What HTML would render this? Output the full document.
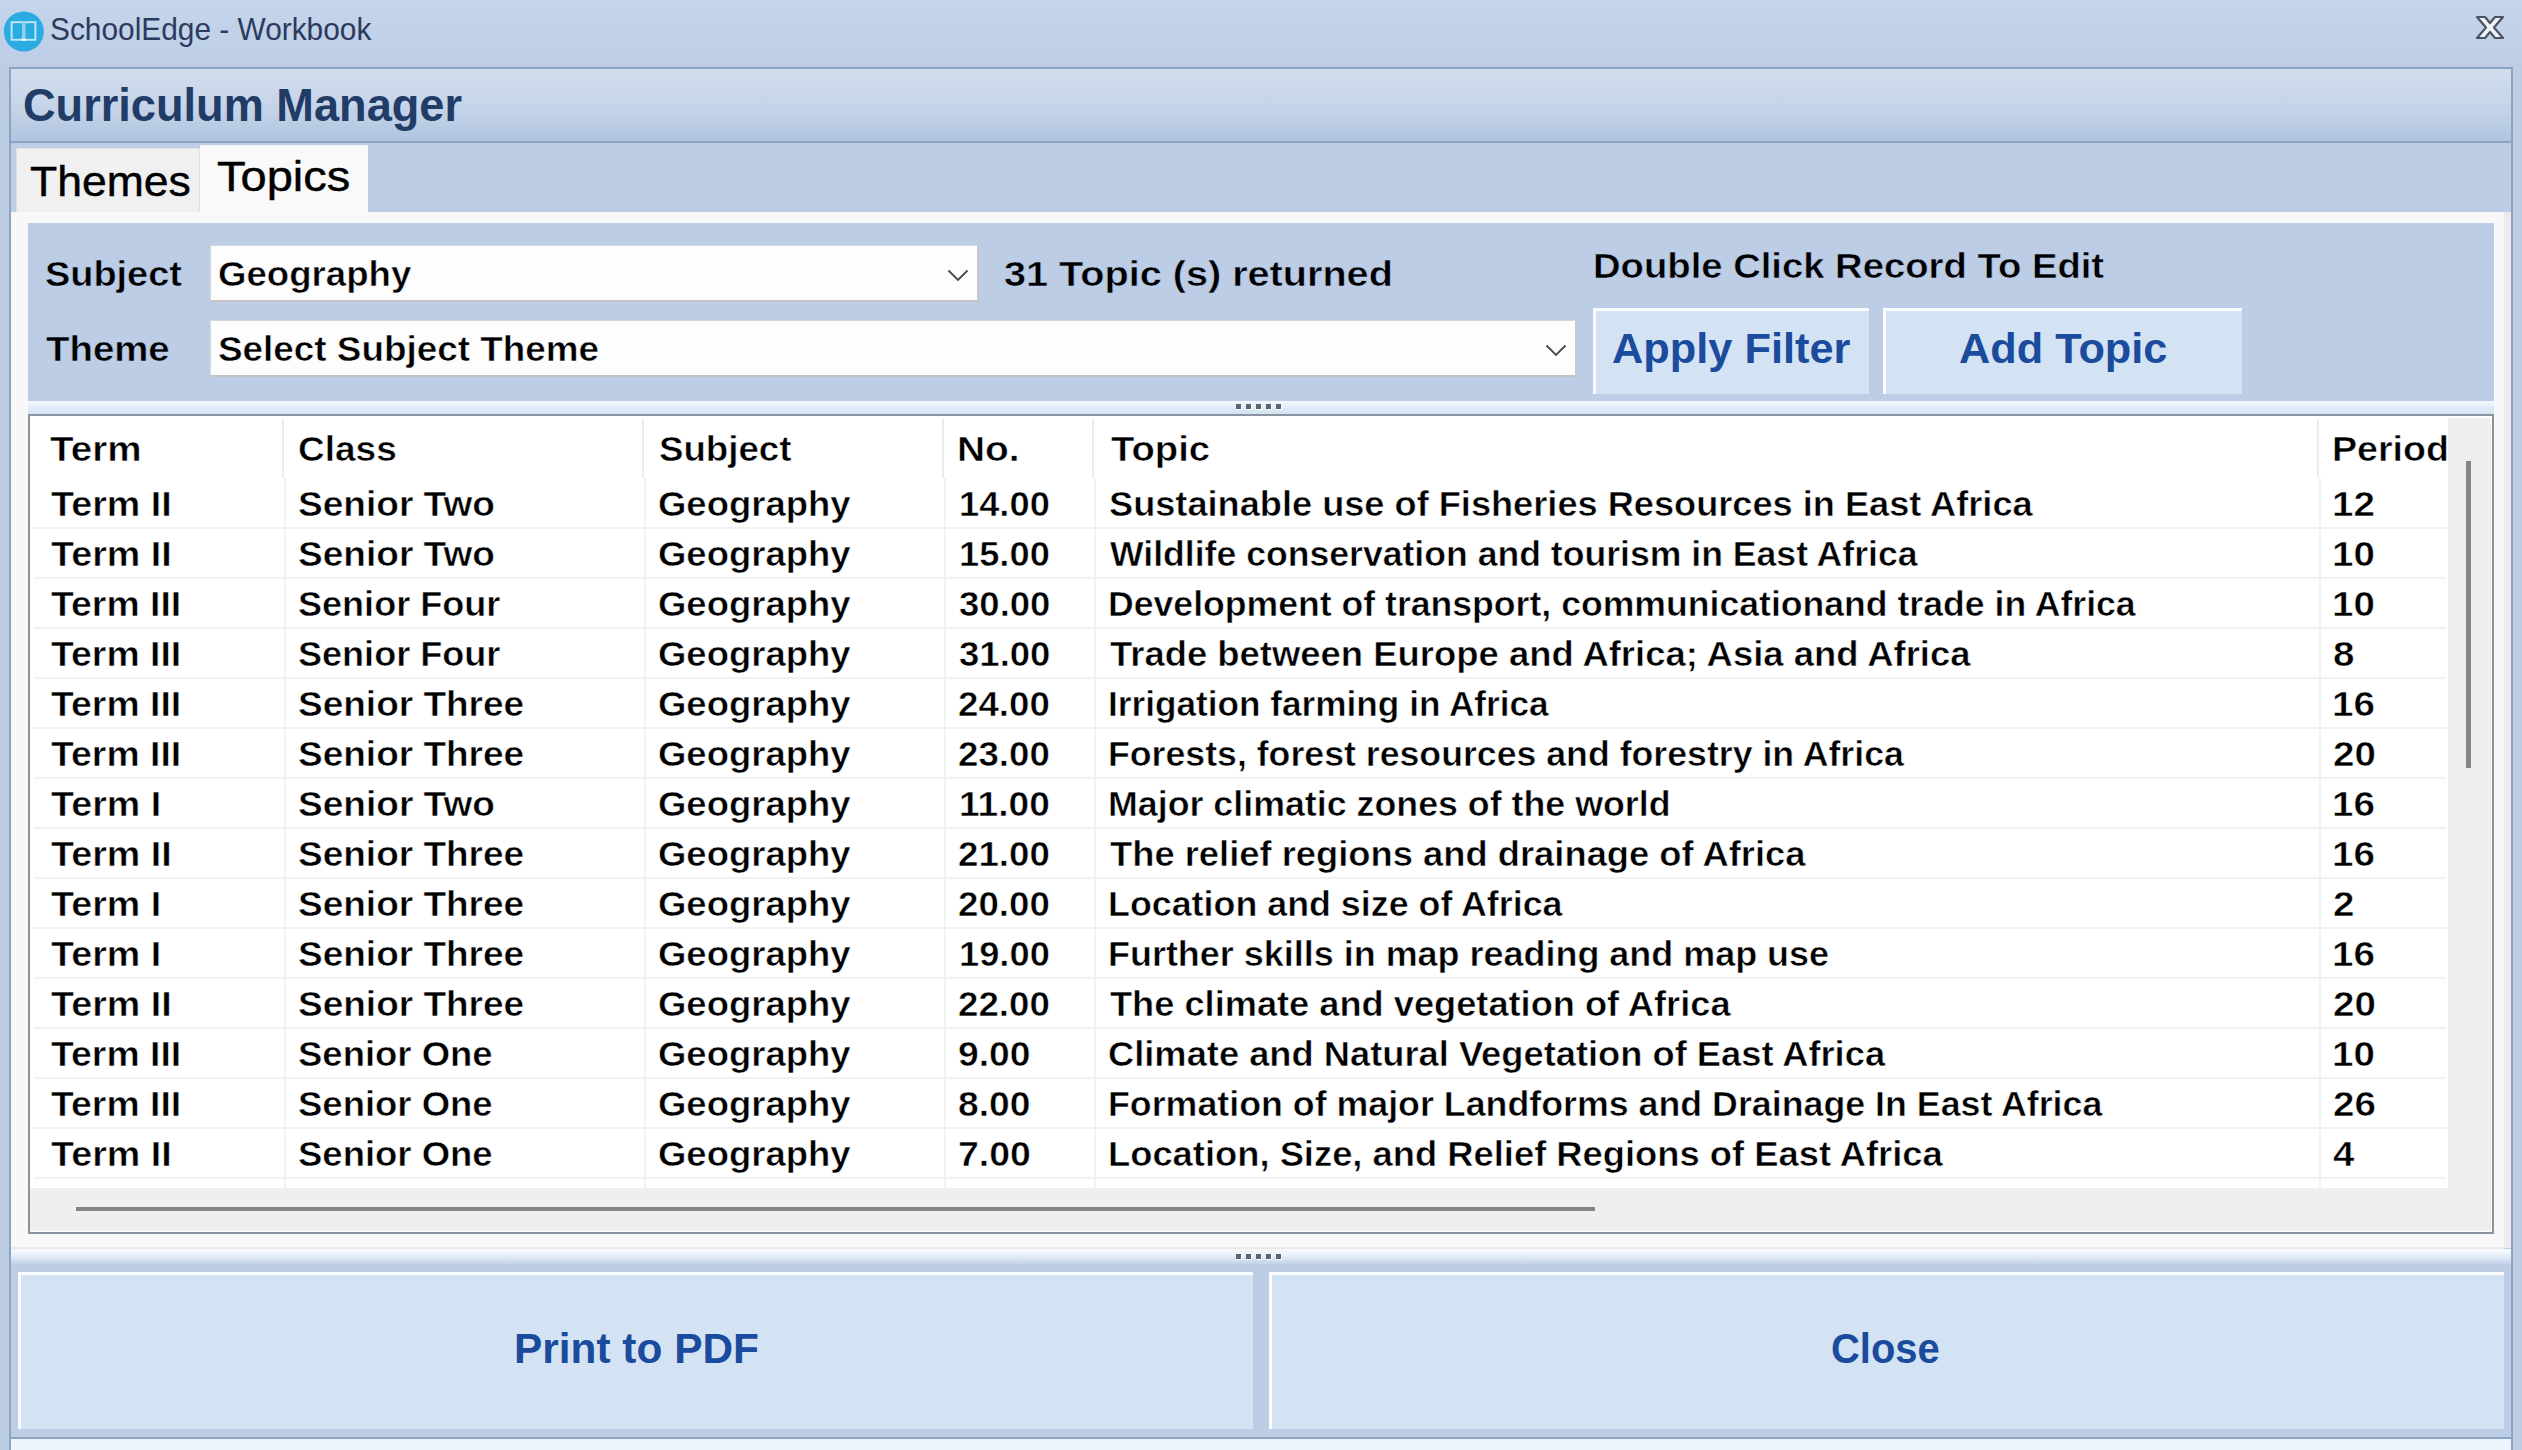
<!DOCTYPE html>
<html><head><meta charset="utf-8"><title>SchoolEdge - Workbook</title>
<style>
html,body{margin:0;padding:0;}
body{width:2522px;height:1450px;position:relative;overflow:hidden;background:#bccde4;font-family:"Liberation Sans",sans-serif;}
body>div,body>span,body>svg{position:absolute;}
.t{white-space:nowrap;line-height:1;transform-origin:0 0;}
</style></head><body>
<div style="left:0px;top:0px;width:2522px;height:67px;background:linear-gradient(#c4d5ec,#bccde5);"></div>
<div style="left:9px;top:67px;width:2504px;height:1372px;border:2px solid #8ba4c5;box-sizing:border-box;background:#bccde5;"></div>
<div style="left:11px;top:1439px;width:2500px;height:11px;background:#eef4fb;"></div>
<div style="left:9px;top:1439px;width:2px;height:11px;background:#8ba4c5;"></div>
<div style="left:2511px;top:1439px;width:2px;height:11px;background:#8ba4c5;"></div>
<svg style="left:3px;top:11px" width="42" height="42" viewBox="0 0 42 42"><circle cx="20.8" cy="20.5" r="20" fill="#2aabe1"/><rect x="8.6" y="11.2" width="23.8" height="17.6" fill="none" stroke="#c2e7f6" stroke-width="1.9"/><rect x="19.1" y="11.2" width="3.4" height="17.6" fill="#8fd1ec"/><ellipse cx="20.8" cy="28.8" rx="3" ry="1.3" fill="#e6f6fd"/></svg>
<span class="t" style="left:49.63px;top:13.49px;font-size:32.27px;font-weight:normal;color:#2c3b5d;transform:scaleX(0.9251);">SchoolEdge - Workbook</span>
<svg style="left:2474px;top:14px" width="32" height="27" viewBox="0 0 32 27"><path d="M3,3 L11,3 L16,9 L21,3 L29,3 L20,13.5 L29,24 L21,24 L16,18 L11,24 L3,24 L12,13.5 Z" fill="#eef3fa" stroke="#4b5262" stroke-width="2.2" stroke-linejoin="round"/></svg>
<div style="left:11px;top:69px;width:2500px;height:72px;background:linear-gradient(#d1ddec 0%,#c8d6ea 45%,#b1c5df 100%);"></div>
<div style="left:11px;top:141px;width:2500px;height:2px;background:#8ba4c5;"></div>
<span class="t" style="left:22.60px;top:81.67px;font-size:46.22px;font-weight:bold;color:#213c66;transform:scaleX(0.9768);">Curriculum Manager</span>
<div style="left:11px;top:143px;width:2500px;height:69px;background:#bccde5;"></div>
<div style="left:16px;top:148px;width:184px;height:64px;background:#f0f0f0;border:1px solid #e2e2e2;border-bottom:none;box-sizing:border-box;"></div>
<div style="left:200px;top:145px;width:168px;height:69px;background:#f9f9f9;"></div>
<span class="t" style="left:29.72px;top:160.03px;font-size:43.31px;font-weight:normal;color:#000;transform:scaleX(1.0283);-webkit-text-stroke:0.45px #000;">Themes</span>
<span class="t" style="left:217.16px;top:155.03px;font-size:43.31px;font-weight:normal;color:#000;transform:scaleX(1.0862);-webkit-text-stroke:0.45px #000;">Topics</span>
<div style="left:11px;top:212px;width:2493px;height:1036px;background:#f8f8f8;"></div>
<div style="left:2504px;top:212px;width:7px;height:1036px;background:#ececec;"></div>
<div style="left:11px;top:1247px;width:2493px;height:2px;background:#e9e9e9;"></div>
<div style="left:11px;top:1249px;width:2500px;height:2px;background:#f5f7fa;"></div>
<div style="left:28px;top:223px;width:2466px;height:178px;background:#bccde5;"></div>
<span class="t" style="left:45.46px;top:257.19px;font-size:34.74px;font-weight:bold;color:#000;transform:scaleX(1.0908);-webkit-text-stroke:0.5px #bccde5;">Subject</span>
<span class="t" style="left:45.54px;top:331.79px;font-size:34.74px;font-weight:bold;color:#000;transform:scaleX(1.1051);-webkit-text-stroke:0.5px #bccde5;">Theme</span>
<div style="left:210px;top:245px;width:769px;height:57px;background:#fdfdfd;border:1px solid #d3d6da;border-right:2px solid #c8c8c8;border-bottom:2px solid #c4c4c4;box-sizing:border-box;"></div>
<div style="left:210px;top:320px;width:1367px;height:57px;background:#fdfdfd;border:1px solid #d3d6da;border-right:2px solid #c8c8c8;border-bottom:2px solid #c4c4c4;box-sizing:border-box;"></div>
<span class="t" style="left:217.76px;top:257.19px;font-size:34.74px;font-weight:bold;color:#000;transform:scaleX(1.0540);-webkit-text-stroke:0.5px #fdfdfd;">Geography</span>
<span class="t" style="left:218.19px;top:331.79px;font-size:34.74px;font-weight:bold;color:#000;transform:scaleX(1.0613);-webkit-text-stroke:0.5px #fdfdfd;">Select Subject Theme</span>
<svg style="left:946px;top:268px" width="24" height="15" viewBox="0 0 24 15"><path d="M2.5,2.5 L12,12 L21.5,2.5" fill="none" stroke="#4a4a4a" stroke-width="1.9"/></svg>
<svg style="left:1544px;top:343px" width="24" height="15" viewBox="0 0 24 15"><path d="M2.5,2.5 L12,12 L21.5,2.5" fill="none" stroke="#4a4a4a" stroke-width="1.9"/></svg>
<span class="t" style="left:1003.75px;top:257.19px;font-size:34.74px;font-weight:bold;color:#000;transform:scaleX(1.1404);-webkit-text-stroke:0.5px #bccde5;">31 Topic (s) returned</span>
<span class="t" style="left:1592.98px;top:249.29px;font-size:34.74px;font-weight:bold;color:#000;transform:scaleX(1.1004);-webkit-text-stroke:0.5px #bccde5;">Double Click Record To Edit</span>
<div style="left:1593px;top:308px;width:276px;height:86px;background:#d4e3f3;border-left:3px solid #fafcff;border-top:3px solid #fafcff;box-sizing:border-box;"></div>
<div style="left:1883px;top:308px;width:359px;height:86px;background:#d4e3f3;border-left:3px solid #fafcff;border-top:3px solid #fafcff;box-sizing:border-box;"></div>
<span class="t" style="left:1612.17px;top:327.62px;font-size:42.15px;font-weight:bold;color:#1a4b9c;transform:scaleX(1.0285);">Apply Filter</span>
<span class="t" style="left:1958.87px;top:327.62px;font-size:42.15px;font-weight:bold;color:#1a4b9c;transform:scaleX(1.0271);">Add Topic</span>
<div style="left:28px;top:401px;width:2466px;height:13px;background:linear-gradient(#f6f9fe 0%,#e9f0fa 30%,#d3e2f3 100%);"></div>
<div style="left:1237px;top:405px;width:5px;height:5px;background:#ffffff;"></div>
<div style="left:1236px;top:404px;width:5px;height:5px;background:#5f646c;"></div>
<div style="left:1247px;top:405px;width:5px;height:5px;background:#ffffff;"></div>
<div style="left:1246px;top:404px;width:5px;height:5px;background:#5f646c;"></div>
<div style="left:1257px;top:405px;width:5px;height:5px;background:#ffffff;"></div>
<div style="left:1256px;top:404px;width:5px;height:5px;background:#5f646c;"></div>
<div style="left:1267px;top:405px;width:5px;height:5px;background:#ffffff;"></div>
<div style="left:1266px;top:404px;width:5px;height:5px;background:#5f646c;"></div>
<div style="left:1277px;top:405px;width:5px;height:5px;background:#ffffff;"></div>
<div style="left:1276px;top:404px;width:5px;height:5px;background:#5f646c;"></div>
<div style="left:28px;top:414px;width:2466px;height:820px;background:#fff;border:2px solid #8b93a0;box-sizing:border-box;"></div>
<div style="left:2448px;top:418px;width:43px;height:770px;background:#efefef;"></div>
<div style="left:2466px;top:461px;width:5px;height:307px;background:#858585;"></div>
<div style="left:30px;top:1188px;width:2461px;height:43px;background:#efefef;"></div>
<div style="left:76px;top:1207px;width:1519px;height:4px;background:#858585;"></div>
<div style="left:281.5px;top:419px;width:2.0px;height:59px;background:#ebebeb;"></div>
<div style="left:641.5px;top:419px;width:2.0px;height:59px;background:#ebebeb;"></div>
<div style="left:941.5px;top:419px;width:2.0px;height:59px;background:#ebebeb;"></div>
<div style="left:1091.5px;top:419px;width:2.0px;height:59px;background:#ebebeb;"></div>
<div style="left:2316.5px;top:419px;width:2.0px;height:59px;background:#ebebeb;"></div>
<div style="left:284px;top:478px;width:2px;height:710px;background:#f2f2f2;"></div>
<div style="left:644px;top:478px;width:2px;height:710px;background:#f2f2f2;"></div>
<div style="left:944px;top:478px;width:2px;height:710px;background:#f2f2f2;"></div>
<div style="left:1094px;top:478px;width:2px;height:710px;background:#f2f2f2;"></div>
<div style="left:2319px;top:478px;width:2px;height:710px;background:#f2f2f2;"></div>
<div style="left:34px;top:526.5px;width:2412px;height:2.0px;background:#f1f1f1;"></div>
<div style="left:34px;top:576.5px;width:2412px;height:2.0px;background:#f1f1f1;"></div>
<div style="left:34px;top:626.5px;width:2412px;height:2.0px;background:#f1f1f1;"></div>
<div style="left:34px;top:676.5px;width:2412px;height:2.0px;background:#f1f1f1;"></div>
<div style="left:34px;top:726.5px;width:2412px;height:2.0px;background:#f1f1f1;"></div>
<div style="left:34px;top:776.5px;width:2412px;height:2.0px;background:#f1f1f1;"></div>
<div style="left:34px;top:826.5px;width:2412px;height:2.0px;background:#f1f1f1;"></div>
<div style="left:34px;top:876.5px;width:2412px;height:2.0px;background:#f1f1f1;"></div>
<div style="left:34px;top:926.5px;width:2412px;height:2.0px;background:#f1f1f1;"></div>
<div style="left:34px;top:976.5px;width:2412px;height:2.0px;background:#f1f1f1;"></div>
<div style="left:34px;top:1026.5px;width:2412px;height:2.0px;background:#f1f1f1;"></div>
<div style="left:34px;top:1076.5px;width:2412px;height:2.0px;background:#f1f1f1;"></div>
<div style="left:34px;top:1126.5px;width:2412px;height:2.0px;background:#f1f1f1;"></div>
<div style="left:34px;top:1176.5px;width:2412px;height:2.0px;background:#f1f1f1;"></div>
<span class="t" style="left:49.84px;top:431.69px;font-size:34.74px;font-weight:bold;color:#000;transform:scaleX(1.1111);-webkit-text-stroke:0.5px #fff;">Term</span>
<span class="t" style="left:298.25px;top:431.69px;font-size:34.74px;font-weight:bold;color:#000;transform:scaleX(1.0653);-webkit-text-stroke:0.5px #fff;">Class</span>
<span class="t" style="left:658.90px;top:431.69px;font-size:34.74px;font-weight:bold;color:#000;transform:scaleX(1.0553);-webkit-text-stroke:0.5px #fff;">Subject</span>
<span class="t" style="left:957.43px;top:431.69px;font-size:34.74px;font-weight:bold;color:#000;transform:scaleX(1.1199);-webkit-text-stroke:0.5px #fff;">No.</span>
<span class="t" style="left:1111.44px;top:431.69px;font-size:34.74px;font-weight:bold;color:#000;transform:scaleX(1.0995);-webkit-text-stroke:0.5px #fff;">Topic</span>
<span class="t" style="left:2331.92px;top:431.69px;font-size:34.74px;font-weight:bold;color:#000;transform:scaleX(1.0819);-webkit-text-stroke:0.5px #fff;">Period</span>
<span class="t" style="left:50.55px;top:486.89px;font-size:34.74px;font-weight:bold;color:#000;transform:scaleX(1.0846);-webkit-text-stroke:0.5px #fff;">Term II</span>
<span class="t" style="left:297.89px;top:486.89px;font-size:34.74px;font-weight:bold;color:#000;transform:scaleX(1.0667);-webkit-text-stroke:0.5px #fff;">Senior Two</span>
<span class="t" style="left:658.47px;top:486.89px;font-size:34.74px;font-weight:bold;color:#000;transform:scaleX(1.0502);-webkit-text-stroke:0.5px #fff;">Geography</span>
<span class="t" style="left:959.25px;top:486.89px;font-size:34.74px;font-weight:bold;color:#000;transform:scaleX(1.0447);-webkit-text-stroke:0.5px #fff;">14.00</span>
<span class="t" style="left:1108.91px;top:486.89px;font-size:34.74px;font-weight:bold;color:#000;transform:scaleX(1.0417);-webkit-text-stroke:0.5px #fff;">Sustainable use of Fisheries Resources in East Africa</span>
<span class="t" style="left:2331.61px;top:486.89px;font-size:34.74px;font-weight:bold;color:#000;transform:scaleX(1.1100);-webkit-text-stroke:0.5px #fff;">12</span>
<span class="t" style="left:50.55px;top:536.89px;font-size:34.74px;font-weight:bold;color:#000;transform:scaleX(1.0846);-webkit-text-stroke:0.5px #fff;">Term II</span>
<span class="t" style="left:297.89px;top:536.89px;font-size:34.74px;font-weight:bold;color:#000;transform:scaleX(1.0667);-webkit-text-stroke:0.5px #fff;">Senior Two</span>
<span class="t" style="left:658.47px;top:536.89px;font-size:34.74px;font-weight:bold;color:#000;transform:scaleX(1.0502);-webkit-text-stroke:0.5px #fff;">Geography</span>
<span class="t" style="left:959.25px;top:536.89px;font-size:34.74px;font-weight:bold;color:#000;transform:scaleX(1.0447);-webkit-text-stroke:0.5px #fff;">15.00</span>
<span class="t" style="left:1109.93px;top:536.89px;font-size:34.74px;font-weight:bold;color:#000;transform:scaleX(1.0250);-webkit-text-stroke:0.5px #fff;">Wildlife conservation and tourism in East Africa</span>
<span class="t" style="left:2331.61px;top:536.89px;font-size:34.74px;font-weight:bold;color:#000;transform:scaleX(1.1100);-webkit-text-stroke:0.5px #fff;">10</span>
<span class="t" style="left:50.55px;top:586.89px;font-size:34.74px;font-weight:bold;color:#000;transform:scaleX(1.0763);-webkit-text-stroke:0.5px #fff;">Term III</span>
<span class="t" style="left:297.92px;top:586.89px;font-size:34.74px;font-weight:bold;color:#000;transform:scaleX(1.0380);-webkit-text-stroke:0.5px #fff;">Senior Four</span>
<span class="t" style="left:658.47px;top:586.89px;font-size:34.74px;font-weight:bold;color:#000;transform:scaleX(1.0502);-webkit-text-stroke:0.5px #fff;">Geography</span>
<span class="t" style="left:958.62px;top:586.89px;font-size:34.74px;font-weight:bold;color:#000;transform:scaleX(1.0520);-webkit-text-stroke:0.5px #fff;">30.00</span>
<span class="t" style="left:1107.65px;top:586.89px;font-size:34.74px;font-weight:bold;color:#000;transform:scaleX(1.0253);-webkit-text-stroke:0.5px #fff;">Development of transport, communicationand trade in Africa</span>
<span class="t" style="left:2331.61px;top:586.89px;font-size:34.74px;font-weight:bold;color:#000;transform:scaleX(1.1100);-webkit-text-stroke:0.5px #fff;">10</span>
<span class="t" style="left:50.55px;top:636.89px;font-size:34.74px;font-weight:bold;color:#000;transform:scaleX(1.0763);-webkit-text-stroke:0.5px #fff;">Term III</span>
<span class="t" style="left:297.92px;top:636.89px;font-size:34.74px;font-weight:bold;color:#000;transform:scaleX(1.0380);-webkit-text-stroke:0.5px #fff;">Senior Four</span>
<span class="t" style="left:658.47px;top:636.89px;font-size:34.74px;font-weight:bold;color:#000;transform:scaleX(1.0502);-webkit-text-stroke:0.5px #fff;">Geography</span>
<span class="t" style="left:958.62px;top:636.89px;font-size:34.74px;font-weight:bold;color:#000;transform:scaleX(1.0520);-webkit-text-stroke:0.5px #fff;">31.00</span>
<span class="t" style="left:1109.56px;top:636.89px;font-size:34.74px;font-weight:bold;color:#000;transform:scaleX(1.0490);-webkit-text-stroke:0.5px #fff;">Trade between Europe and Africa; Asia and Africa</span>
<span class="t" style="left:2332.77px;top:636.89px;font-size:34.74px;font-weight:bold;color:#000;transform:scaleX(1.1100);-webkit-text-stroke:0.5px #fff;">8</span>
<span class="t" style="left:50.55px;top:686.89px;font-size:34.74px;font-weight:bold;color:#000;transform:scaleX(1.0763);-webkit-text-stroke:0.5px #fff;">Term III</span>
<span class="t" style="left:297.89px;top:686.89px;font-size:34.74px;font-weight:bold;color:#000;transform:scaleX(1.0652);-webkit-text-stroke:0.5px #fff;">Senior Three</span>
<span class="t" style="left:658.47px;top:686.89px;font-size:34.74px;font-weight:bold;color:#000;transform:scaleX(1.0502);-webkit-text-stroke:0.5px #fff;">Geography</span>
<span class="t" style="left:958.25px;top:686.89px;font-size:34.74px;font-weight:bold;color:#000;transform:scaleX(1.0564);-webkit-text-stroke:0.5px #fff;">24.00</span>
<span class="t" style="left:1107.68px;top:686.89px;font-size:34.74px;font-weight:bold;color:#000;transform:scaleX(1.0133);-webkit-text-stroke:0.5px #fff;">Irrigation farming in Africa</span>
<span class="t" style="left:2331.61px;top:686.89px;font-size:34.74px;font-weight:bold;color:#000;transform:scaleX(1.1100);-webkit-text-stroke:0.5px #fff;">16</span>
<span class="t" style="left:50.55px;top:736.89px;font-size:34.74px;font-weight:bold;color:#000;transform:scaleX(1.0763);-webkit-text-stroke:0.5px #fff;">Term III</span>
<span class="t" style="left:297.89px;top:736.89px;font-size:34.74px;font-weight:bold;color:#000;transform:scaleX(1.0652);-webkit-text-stroke:0.5px #fff;">Senior Three</span>
<span class="t" style="left:658.47px;top:736.89px;font-size:34.74px;font-weight:bold;color:#000;transform:scaleX(1.0502);-webkit-text-stroke:0.5px #fff;">Geography</span>
<span class="t" style="left:958.25px;top:736.89px;font-size:34.74px;font-weight:bold;color:#000;transform:scaleX(1.0564);-webkit-text-stroke:0.5px #fff;">23.00</span>
<span class="t" style="left:1107.64px;top:736.89px;font-size:34.74px;font-weight:bold;color:#000;transform:scaleX(1.0273);-webkit-text-stroke:0.5px #fff;">Forests, forest resources and forestry in Africa</span>
<span class="t" style="left:2332.69px;top:736.89px;font-size:34.74px;font-weight:bold;color:#000;transform:scaleX(1.1100);-webkit-text-stroke:0.5px #fff;">20</span>
<span class="t" style="left:50.55px;top:786.89px;font-size:34.74px;font-weight:bold;color:#000;transform:scaleX(1.0843);-webkit-text-stroke:0.5px #fff;">Term I</span>
<span class="t" style="left:297.89px;top:786.89px;font-size:34.74px;font-weight:bold;color:#000;transform:scaleX(1.0667);-webkit-text-stroke:0.5px #fff;">Senior Two</span>
<span class="t" style="left:658.47px;top:786.89px;font-size:34.74px;font-weight:bold;color:#000;transform:scaleX(1.0502);-webkit-text-stroke:0.5px #fff;">Geography</span>
<span class="t" style="left:959.20px;top:786.89px;font-size:34.74px;font-weight:bold;color:#000;transform:scaleX(1.0688);-webkit-text-stroke:0.5px #fff;">11.00</span>
<span class="t" style="left:1107.64px;top:786.89px;font-size:34.74px;font-weight:bold;color:#000;transform:scaleX(1.0300);-webkit-text-stroke:0.5px #fff;">Major climatic zones of the world</span>
<span class="t" style="left:2331.61px;top:786.89px;font-size:34.74px;font-weight:bold;color:#000;transform:scaleX(1.1100);-webkit-text-stroke:0.5px #fff;">16</span>
<span class="t" style="left:50.55px;top:836.89px;font-size:34.74px;font-weight:bold;color:#000;transform:scaleX(1.0846);-webkit-text-stroke:0.5px #fff;">Term II</span>
<span class="t" style="left:297.89px;top:836.89px;font-size:34.74px;font-weight:bold;color:#000;transform:scaleX(1.0652);-webkit-text-stroke:0.5px #fff;">Senior Three</span>
<span class="t" style="left:658.47px;top:836.89px;font-size:34.74px;font-weight:bold;color:#000;transform:scaleX(1.0502);-webkit-text-stroke:0.5px #fff;">Geography</span>
<span class="t" style="left:958.25px;top:836.89px;font-size:34.74px;font-weight:bold;color:#000;transform:scaleX(1.0564);-webkit-text-stroke:0.5px #fff;">21.00</span>
<span class="t" style="left:1109.56px;top:836.89px;font-size:34.74px;font-weight:bold;color:#000;transform:scaleX(1.0464);-webkit-text-stroke:0.5px #fff;">The relief regions and drainage of Africa</span>
<span class="t" style="left:2331.61px;top:836.89px;font-size:34.74px;font-weight:bold;color:#000;transform:scaleX(1.1100);-webkit-text-stroke:0.5px #fff;">16</span>
<span class="t" style="left:50.55px;top:886.89px;font-size:34.74px;font-weight:bold;color:#000;transform:scaleX(1.0843);-webkit-text-stroke:0.5px #fff;">Term I</span>
<span class="t" style="left:297.89px;top:886.89px;font-size:34.74px;font-weight:bold;color:#000;transform:scaleX(1.0652);-webkit-text-stroke:0.5px #fff;">Senior Three</span>
<span class="t" style="left:658.47px;top:886.89px;font-size:34.74px;font-weight:bold;color:#000;transform:scaleX(1.0502);-webkit-text-stroke:0.5px #fff;">Geography</span>
<span class="t" style="left:958.25px;top:886.89px;font-size:34.74px;font-weight:bold;color:#000;transform:scaleX(1.0564);-webkit-text-stroke:0.5px #fff;">20.00</span>
<span class="t" style="left:1107.64px;top:886.89px;font-size:34.74px;font-weight:bold;color:#000;transform:scaleX(1.0314);-webkit-text-stroke:0.5px #fff;">Location and size of Africa</span>
<span class="t" style="left:2332.69px;top:886.89px;font-size:34.74px;font-weight:bold;color:#000;transform:scaleX(1.1100);-webkit-text-stroke:0.5px #fff;">2</span>
<span class="t" style="left:50.55px;top:936.89px;font-size:34.74px;font-weight:bold;color:#000;transform:scaleX(1.0843);-webkit-text-stroke:0.5px #fff;">Term I</span>
<span class="t" style="left:297.89px;top:936.89px;font-size:34.74px;font-weight:bold;color:#000;transform:scaleX(1.0652);-webkit-text-stroke:0.5px #fff;">Senior Three</span>
<span class="t" style="left:658.47px;top:936.89px;font-size:34.74px;font-weight:bold;color:#000;transform:scaleX(1.0502);-webkit-text-stroke:0.5px #fff;">Geography</span>
<span class="t" style="left:959.25px;top:936.89px;font-size:34.74px;font-weight:bold;color:#000;transform:scaleX(1.0447);-webkit-text-stroke:0.5px #fff;">19.00</span>
<span class="t" style="left:1107.63px;top:936.89px;font-size:34.74px;font-weight:bold;color:#000;transform:scaleX(1.0348);-webkit-text-stroke:0.5px #fff;">Further skills in map reading and map use</span>
<span class="t" style="left:2331.61px;top:936.89px;font-size:34.74px;font-weight:bold;color:#000;transform:scaleX(1.1100);-webkit-text-stroke:0.5px #fff;">16</span>
<span class="t" style="left:50.55px;top:986.89px;font-size:34.74px;font-weight:bold;color:#000;transform:scaleX(1.0846);-webkit-text-stroke:0.5px #fff;">Term II</span>
<span class="t" style="left:297.89px;top:986.89px;font-size:34.74px;font-weight:bold;color:#000;transform:scaleX(1.0652);-webkit-text-stroke:0.5px #fff;">Senior Three</span>
<span class="t" style="left:658.47px;top:986.89px;font-size:34.74px;font-weight:bold;color:#000;transform:scaleX(1.0502);-webkit-text-stroke:0.5px #fff;">Geography</span>
<span class="t" style="left:958.25px;top:986.89px;font-size:34.74px;font-weight:bold;color:#000;transform:scaleX(1.0564);-webkit-text-stroke:0.5px #fff;">22.00</span>
<span class="t" style="left:1109.57px;top:986.89px;font-size:34.74px;font-weight:bold;color:#000;transform:scaleX(1.0427);-webkit-text-stroke:0.5px #fff;">The climate and vegetation of Africa</span>
<span class="t" style="left:2332.69px;top:986.89px;font-size:34.74px;font-weight:bold;color:#000;transform:scaleX(1.1100);-webkit-text-stroke:0.5px #fff;">20</span>
<span class="t" style="left:50.55px;top:1036.89px;font-size:34.74px;font-weight:bold;color:#000;transform:scaleX(1.0763);-webkit-text-stroke:0.5px #fff;">Term III</span>
<span class="t" style="left:297.91px;top:1036.89px;font-size:34.74px;font-weight:bold;color:#000;transform:scaleX(1.0504);-webkit-text-stroke:0.5px #fff;">Senior One</span>
<span class="t" style="left:658.47px;top:1036.89px;font-size:34.74px;font-weight:bold;color:#000;transform:scaleX(1.0502);-webkit-text-stroke:0.5px #fff;">Geography</span>
<span class="t" style="left:957.83px;top:1036.89px;font-size:34.74px;font-weight:bold;color:#000;transform:scaleX(1.0733);-webkit-text-stroke:0.5px #fff;">9.00</span>
<span class="t" style="left:1108.48px;top:1036.89px;font-size:34.74px;font-weight:bold;color:#000;transform:scaleX(1.0448);-webkit-text-stroke:0.5px #fff;">Climate and Natural Vegetation of East Africa</span>
<span class="t" style="left:2331.61px;top:1036.89px;font-size:34.74px;font-weight:bold;color:#000;transform:scaleX(1.1100);-webkit-text-stroke:0.5px #fff;">10</span>
<span class="t" style="left:50.55px;top:1086.89px;font-size:34.74px;font-weight:bold;color:#000;transform:scaleX(1.0763);-webkit-text-stroke:0.5px #fff;">Term III</span>
<span class="t" style="left:297.91px;top:1086.89px;font-size:34.74px;font-weight:bold;color:#000;transform:scaleX(1.0504);-webkit-text-stroke:0.5px #fff;">Senior One</span>
<span class="t" style="left:658.47px;top:1086.89px;font-size:34.74px;font-weight:bold;color:#000;transform:scaleX(1.0502);-webkit-text-stroke:0.5px #fff;">Geography</span>
<span class="t" style="left:957.91px;top:1086.89px;font-size:34.74px;font-weight:bold;color:#000;transform:scaleX(1.0722);-webkit-text-stroke:0.5px #fff;">8.00</span>
<span class="t" style="left:1107.64px;top:1086.89px;font-size:34.74px;font-weight:bold;color:#000;transform:scaleX(1.0297);-webkit-text-stroke:0.5px #fff;">Formation of major Landforms and Drainage In East Africa</span>
<span class="t" style="left:2332.69px;top:1086.89px;font-size:34.74px;font-weight:bold;color:#000;transform:scaleX(1.1100);-webkit-text-stroke:0.5px #fff;">26</span>
<span class="t" style="left:50.55px;top:1136.89px;font-size:34.74px;font-weight:bold;color:#000;transform:scaleX(1.0846);-webkit-text-stroke:0.5px #fff;">Term II</span>
<span class="t" style="left:297.91px;top:1136.89px;font-size:34.74px;font-weight:bold;color:#000;transform:scaleX(1.0504);-webkit-text-stroke:0.5px #fff;">Senior One</span>
<span class="t" style="left:658.47px;top:1136.89px;font-size:34.74px;font-weight:bold;color:#000;transform:scaleX(1.0502);-webkit-text-stroke:0.5px #fff;">Geography</span>
<span class="t" style="left:957.53px;top:1136.89px;font-size:34.74px;font-weight:bold;color:#000;transform:scaleX(1.0780);-webkit-text-stroke:0.5px #fff;">7.00</span>
<span class="t" style="left:1107.60px;top:1136.89px;font-size:34.74px;font-weight:bold;color:#000;transform:scaleX(1.0464);-webkit-text-stroke:0.5px #fff;">Location, Size, and Relief Regions of East Africa</span>
<span class="t" style="left:2333.38px;top:1136.89px;font-size:34.74px;font-weight:bold;color:#000;transform:scaleX(1.1100);-webkit-text-stroke:0.5px #fff;">4</span>
<div style="left:11px;top:1251px;width:2500px;height:13px;background:linear-gradient(#f4f8fd 0%,#e4edf9 40%,#c3d3e8 100%);"></div>
<div style="left:1237px;top:1255px;width:5px;height:5px;background:#ffffff;"></div>
<div style="left:1236px;top:1254px;width:5px;height:5px;background:#5f646c;"></div>
<div style="left:1247px;top:1255px;width:5px;height:5px;background:#ffffff;"></div>
<div style="left:1246px;top:1254px;width:5px;height:5px;background:#5f646c;"></div>
<div style="left:1257px;top:1255px;width:5px;height:5px;background:#ffffff;"></div>
<div style="left:1256px;top:1254px;width:5px;height:5px;background:#5f646c;"></div>
<div style="left:1267px;top:1255px;width:5px;height:5px;background:#ffffff;"></div>
<div style="left:1266px;top:1254px;width:5px;height:5px;background:#5f646c;"></div>
<div style="left:1277px;top:1255px;width:5px;height:5px;background:#ffffff;"></div>
<div style="left:1276px;top:1254px;width:5px;height:5px;background:#5f646c;"></div>
<div style="left:11px;top:1264px;width:2500px;height:173px;background:#bccde5;"></div>
<div style="left:18px;top:1272px;width:1235px;height:157px;background:#d4e3f3;border-left:3px solid #fafcff;border-top:3px solid #fafcff;box-sizing:border-box;"></div>
<div style="left:1269px;top:1272px;width:1235px;height:157px;background:#d4e3f3;border-left:3px solid #fafcff;border-top:3px solid #fafcff;box-sizing:border-box;"></div>
<span class="t" style="left:513.60px;top:1328.02px;font-size:42.15px;font-weight:bold;color:#1a4b9c;transform:scaleX(1.0060);">Print to PDF</span>
<span class="t" style="left:1831.12px;top:1328.02px;font-size:42.15px;font-weight:bold;color:#1a4b9c;transform:scaleX(0.9470);">Close</span>
</body></html>
